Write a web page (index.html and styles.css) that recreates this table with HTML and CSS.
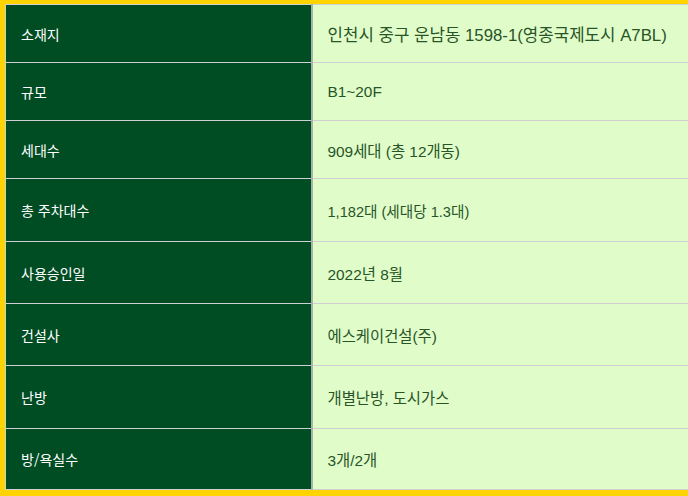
FILE: index.html
```html
<!DOCTYPE html>
<html lang="ko">
<head>
<meta charset="utf-8">
<link rel="stylesheet" href="styles.css">
</head>
<body>
<div class="frame">
  <table class="info">
    <tbody>
      <tr class="r58"><th>소재지</th><td class="lg">인천시 중구 운남동 1598-1(영종국제도시 A7BL)</td></tr>
      <tr class="r58"><th>규모</th><td>B1~20F</td></tr>
      <tr class="r58"><th>세대수</th><td>909세대 (총 12개동)</td></tr>
      <tr class="r63"><th>총 주차대수</th><td class="tight">1,182대 (세대당 1.3대)</td></tr>
      <tr class="r62"><th>사용승인일</th><td>2022년 8월</td></tr>
      <tr class="r62"><th>건설사</th><td>에스케이건설(주)</td></tr>
      <tr class="r63"><th>난방</th><td>개별난방, 도시가스</td></tr>
      <tr class="r61"><th>방/욕실수</th><td>3개/2개</td></tr>
    </tbody>
  </table>
</div>
</body>
</html>
```

FILE: styles.css
```css
html, body {
  margin: 0;
  padding: 0;
  background: #ffd400;
  overflow: hidden;
}

.frame {
  width: 100%;
  height: 496px;
  padding: 4px 0 0 5px;
  box-sizing: border-box;
  overflow: hidden;
}

.info {
  width: 760px;
  border-collapse: collapse;
  table-layout: fixed;
  font-family: "Noto Sans CJK KR", "Liberation Sans", sans-serif;
  font-size: 14px;
}

.info th,
.info td {
  border: 1px solid #cfcfd6;
  padding: 0 0 0 15px;
  text-align: left;
  font-weight: normal;
  vertical-align: middle;
  box-sizing: border-box;
}

.info th {
  width: 306px;
  background: #004d23;
  color: #ffffff;
  border-right: 2px solid #a9b3a9;
}

.info td {
  background: #e0fcc8;
  color: #285428;
  font-family: "Liberation Sans", "Noto Sans CJK KR", sans-serif;
  font-size: 15.4px;
}

.info td.lg {
  font-size: 16.8px;
}

.info td.tight {
  font-size: 14.6px;
}

.r58 { height: 58px; }
.r61 { height: 61px; }
.r62 { height: 62px; }
.r63 { height: 63px; }
```
